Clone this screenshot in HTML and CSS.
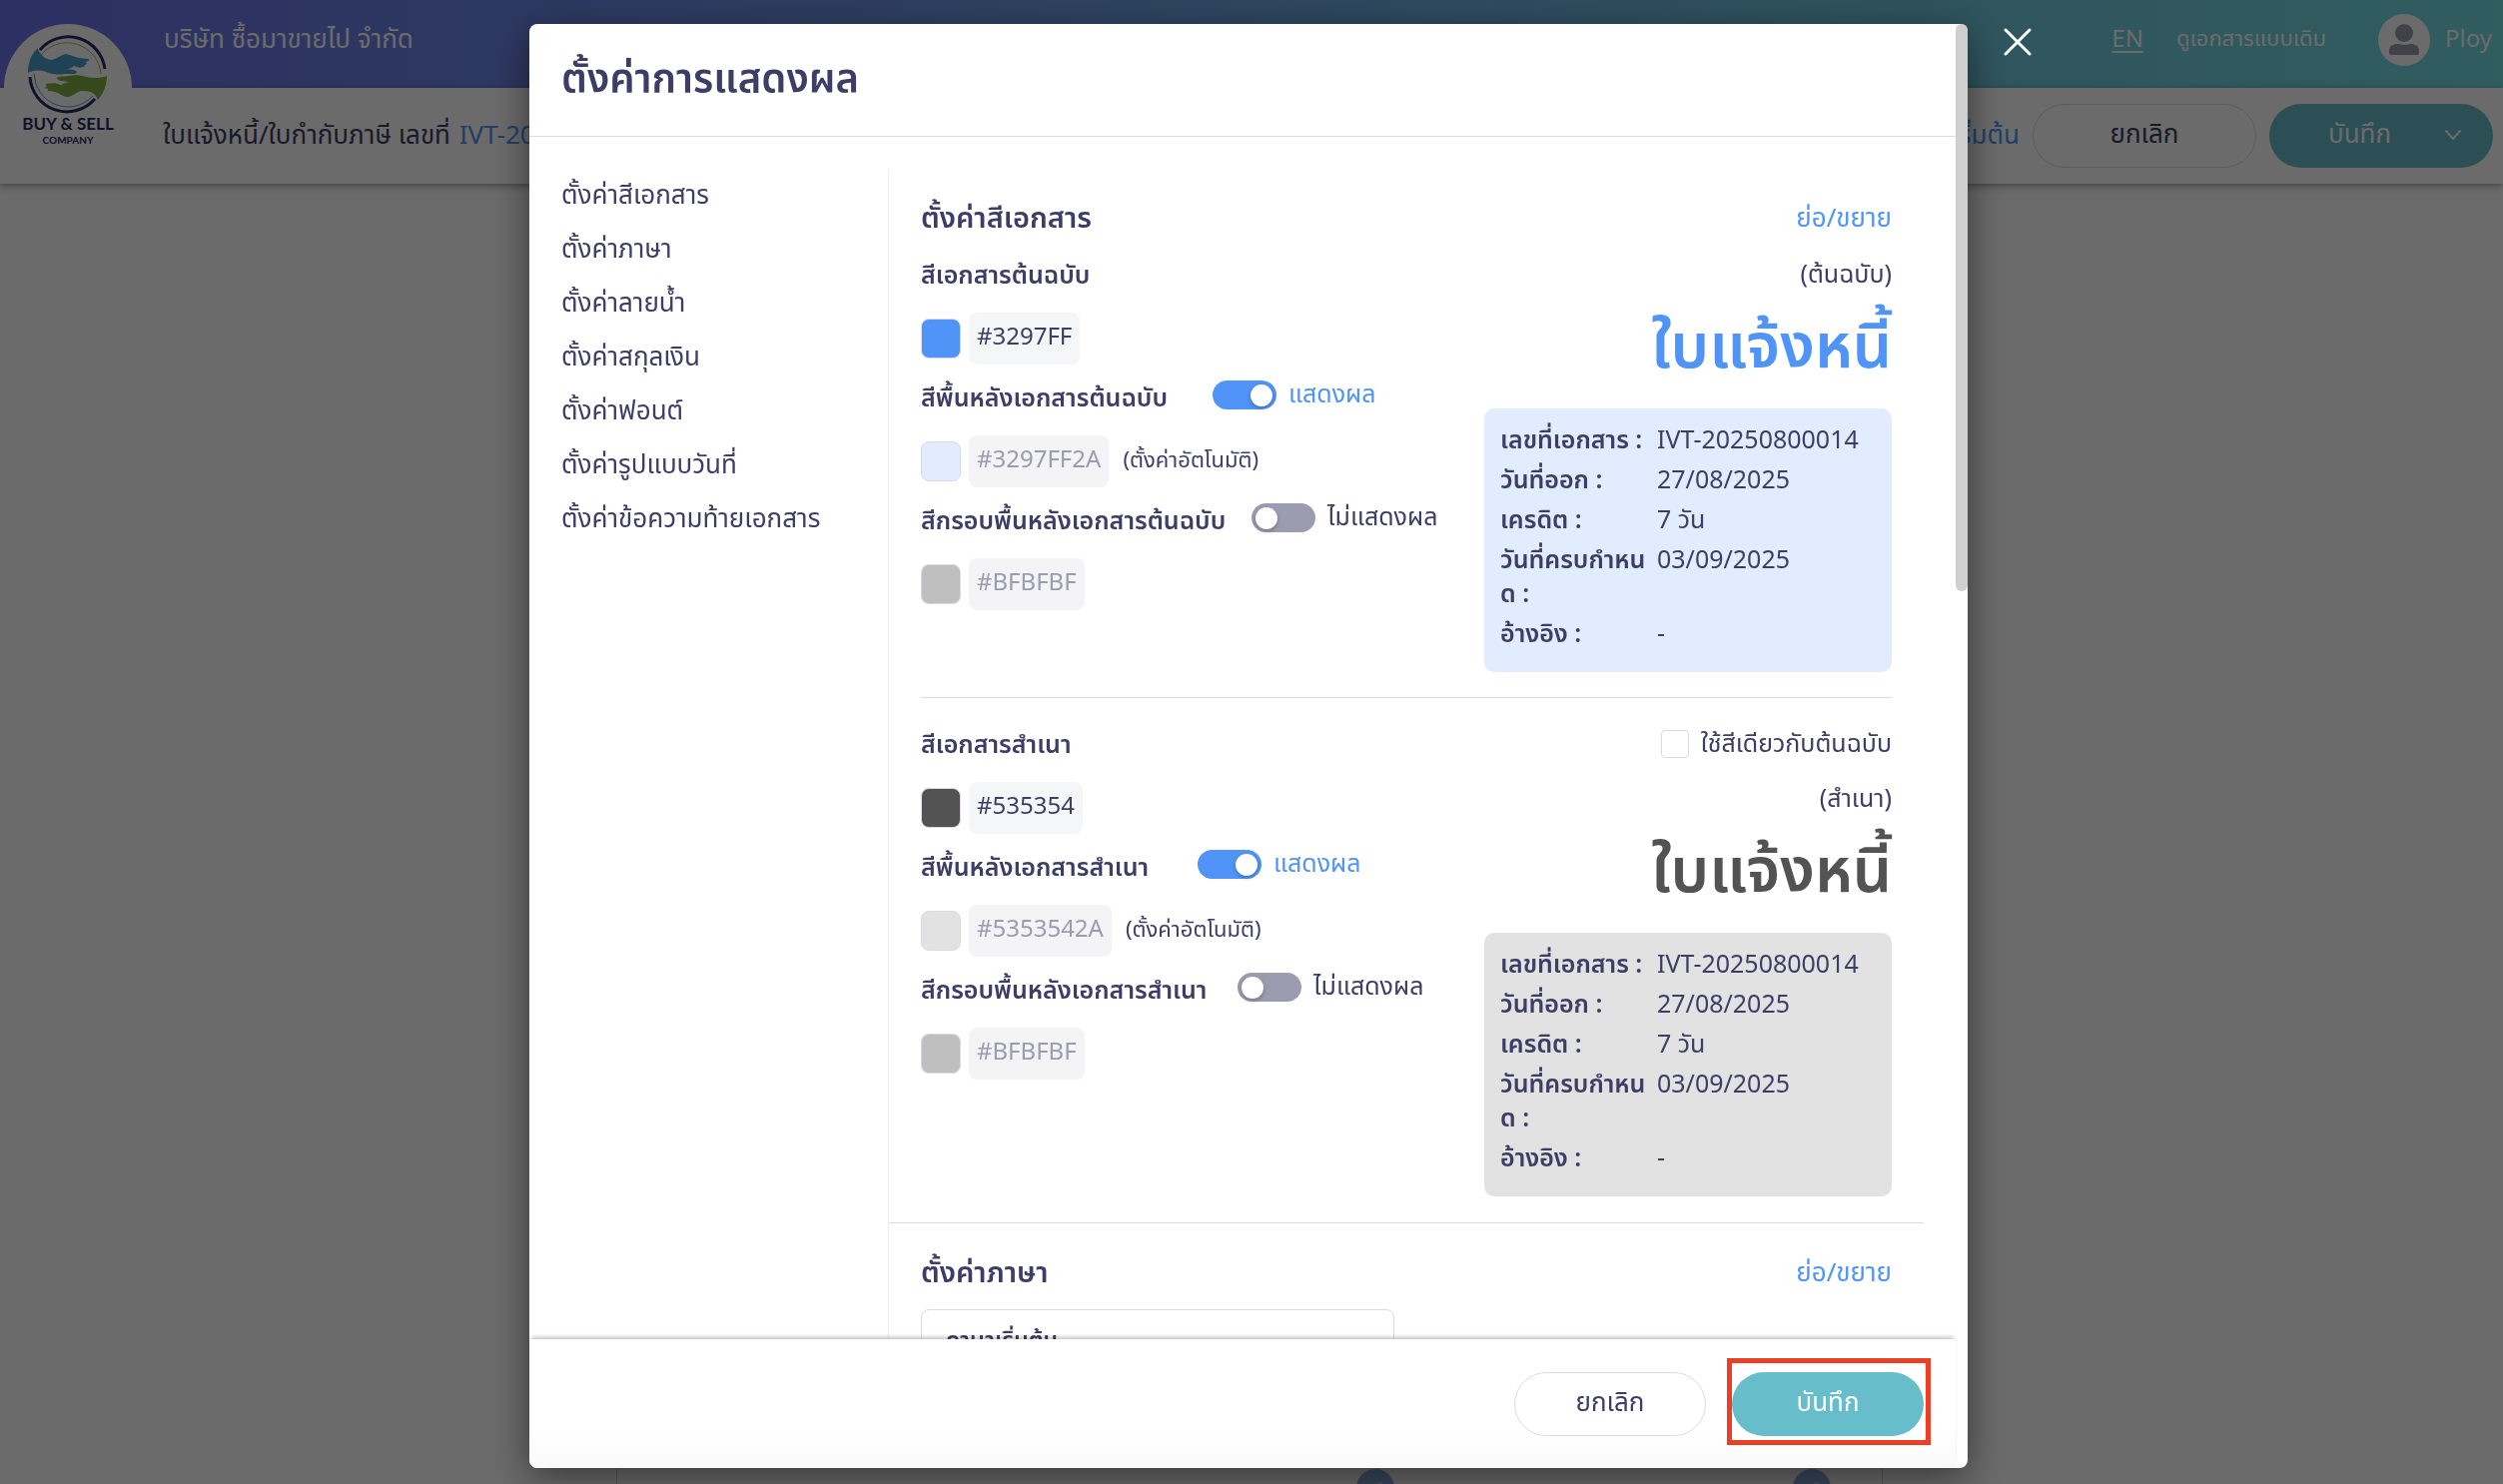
FILE: index.html
```html
<!DOCTYPE html>
<html lang="th">
<head>
<meta charset="utf-8">
<meta name="viewport" content="width=device-width, initial-scale=1">
<title>ตั้งค่าการแสดงผล</title>
<link rel="stylesheet" href="styles.css">
</head>
<body>
<div class="page">
  <header class="topbar">
    <p class="company">บริษัท ซื้อมาขายไป จำกัด</p>
    <nav class="topnav">
      <a class="lang" href="#">EN</a>
      <a class="old-view" href="#">ดูเอกสารแบบเดิม</a>
      <a class="user" href="#">
        <span class="avatar">
          <svg viewBox="0 0 52 52" width="52" height="52" aria-hidden="true">
            <circle cx="26" cy="19" r="9" fill="#9c9cb0"/>
            <path d="M11 37c0-5 4-7 8-7 2 0 4 1 7 1s5-1 7-1c4 0 8 2 8 7v2c0 1-1 2-2 2H13c-1 0-2-1-2-2z" fill="#9c9cb0"/>
          </svg>
        </span>
        Ploy
      </a>
    </nav>
  </header>
  <div class="docbar">
    <div class="logo">
      <svg class="emblem" viewBox="0 0 80 80" width="80" height="80" aria-hidden="true">
        <path d="M12 16A37 37 0 0 1 77 35" fill="none" stroke="#2b2962" stroke-width="3"/>
        <path d="M13 21A34 34 0 0 1 73 40" fill="none" stroke="#9dbb4c" stroke-width="1"/>
        <path d="M2 43A37 37 0 0 0 67 65" fill="none" stroke="#2b2962" stroke-width="3"/>
        <path d="M6 40A34 34 0 0 0 65 62" fill="none" stroke="#5d9ec0" stroke-width="1"/>
        <path d="M10 14C3 20 0 29 0 39c7-3 12-3 18-1 8 3 13 3 18 2h11c3-1 2-3-1-4l-8-1c5 0 7-2 8-3l6 2 2-1 2 0 1-2 2-1-1-2 3-1c1-1 0-2-1-2l-9-1-13-4c-5 1-9 5-15 6-6-1-11-5-13-11z" fill="#4b9dc9"/>
        <path d="M70 66c6-7 9-15 9-24-8 3-14 2-21 1-6-2-12-2-17-1l-11 1c-2 1 0 4 3 4l8 1c-4 1-6 2-8 3l-6-2-9 1c-1 1 0 2 1 2l-2 2 3 1 0 2 3 0 7 2c3 2 6 4 10 4 6-1 9-6 15-6 8 0 13 3 15 9z" fill="#7eae43"/>
      </svg>
      <strong class="logo-name">BUY &amp; SELL</strong>
      <span class="logo-sub">COMPANY</span>
    </div>
    <p class="doc-title">ใบแจ้งหนี้/ใบกำกับภาษี เลขที่ <a class="doc-no" href="#">IVT-20250800014</a></p>
    <div class="doc-actions">
      <a class="link" href="#">ตั้งค่าเริ่มต้น</a>
      <button class="btn btn-outline" type="button">ยกเลิก</button>
      <button class="btn btn-primary btn-split" type="button"><span>บันทึก</span>
        <svg viewBox="0 0 18 12" width="18" height="12" aria-hidden="true"><path d="M2 2l7 8 7-8" fill="none" stroke="#fff" stroke-width="2" stroke-linecap="round" stroke-linejoin="round"/></svg>
      </button>
    </div>
  </div>
  <main class="workspace">
    <div class="sheet">
      <button class="add" type="button" aria-label="เพิ่ม"><svg viewBox="0 0 40 40" width="38" height="38" aria-hidden="true"><circle cx="20" cy="20" r="20" fill="#86abdf"/><circle cx="25" cy="17" r="3" fill="#c4d2e6"/></svg></button>
      <button class="add" type="button" aria-label="เพิ่มรายการ"><svg viewBox="0 0 40 40" width="38" height="38" aria-hidden="true"><circle cx="20" cy="20" r="20" fill="#86abdf"/><circle cx="25" cy="17" r="3" fill="#c4d2e6"/></svg></button>
    </div>
  </main>
</div>

<div class="overlay">
  <section class="modal" role="dialog" aria-labelledby="modal-title">
    <button class="close" type="button" aria-label="ปิด"><svg viewBox="0 0 28 28" width="28" height="28" aria-hidden="true"><path d="M2 2l24 24M26 2L2 26" stroke="#fff" stroke-width="3" stroke-linecap="round"/></svg></button>
    <span class="scroll-thumb"></span>
    <header class="modal-head"><h1 id="modal-title">ตั้งค่าการแสดงผล</h1></header>
    <div class="modal-body">
      <nav class="side">
        <a href="#color">ตั้งค่าสีเอกสาร</a>
        <a href="#lang">ตั้งค่าภาษา</a>
        <a href="#watermark">ตั้งค่าลายน้ำ</a>
        <a href="#currency">ตั้งค่าสกุลเงิน</a>
        <a href="#font">ตั้งค่าฟอนต์</a>
        <a href="#date">ตั้งค่ารูปแบบวันที่</a>
        <a href="#footer">ตั้งค่าข้อความท้ายเอกสาร</a>
      </nav>
      <div class="content">
        <section class="group" id="color">
          <div class="group-head"><h2>ตั้งค่าสีเอกสาร</h2><a class="link" href="#">ย่อ/ขยาย</a></div>
          <div class="color-set">
            <div class="settings">
              <div class="row"><label class="name" for="c1">สีเอกสารต้นฉบับ</label></div>
              <div class="picker"><button class="swatch blue" type="button" aria-label="เลือกสี"></button><input class="code" id="c1" value="#3297FF"></div>
              <div class="row"><label class="name w-bg" for="c2">สีพื้นหลังเอกสารต้นฉบับ</label><label class="switch on"><input type="checkbox" checked>แสดงผล</label></div>
              <div class="picker"><button class="swatch blue-light" type="button" aria-label="เลือกสี"></button><input class="code" id="c2" value="#3297FF2A" disabled><span class="note">(ตั้งค่าอัตโนมัติ)</span></div>
              <div class="row"><label class="name w-frame" for="c3">สีกรอบพื้นหลังเอกสารต้นฉบับ</label><label class="switch"><input type="checkbox">ไม่แสดงผล</label></div>
              <div class="picker"><button class="swatch gray" type="button" aria-label="เลือกสี"></button><input class="code" id="c3" value="#BFBFBF" disabled></div>
            </div>
            <div class="preview">
              <p class="kind">(ต้นฉบับ)</p>
              <p class="doc-name">ใบแจ้งหนี้</p>
              <dl class="info">
                <dt>เลขที่เอกสาร :</dt><dd>IVT-20250800014</dd>
                <dt>วันที่ออก :</dt><dd>27/08/2025</dd>
                <dt>เครดิต :</dt><dd>7 วัน</dd>
                <dt>วันที่ครบกำหนด :</dt><dd>03/09/2025</dd>
                <dt>อ้างอิง :</dt><dd>-</dd>
              </dl>
            </div>
          </div>
          <div class="color-set">
            <div class="settings">
              <div class="row"><label class="name" for="c4">สีเอกสารสำเนา</label></div>
              <div class="picker"><button class="swatch dark" type="button" aria-label="เลือกสี"></button><input class="code" id="c4" value="#535354"></div>
              <div class="row"><label class="name w-bg-copy" for="c5">สีพื้นหลังเอกสารสำเนา</label><label class="switch on"><input type="checkbox" checked>แสดงผล</label></div>
              <div class="picker"><button class="swatch dark-light" type="button" aria-label="เลือกสี"></button><input class="code" id="c5" value="#5353542A" disabled><span class="note">(ตั้งค่าอัตโนมัติ)</span></div>
              <div class="row"><label class="name w-frame-copy" for="c6">สีกรอบพื้นหลังเอกสารสำเนา</label><label class="switch"><input type="checkbox">ไม่แสดงผล</label></div>
              <div class="picker"><button class="swatch gray" type="button" aria-label="เลือกสี"></button><input class="code" id="c6" value="#BFBFBF" disabled></div>
            </div>
            <div class="preview copy">
              <label class="same"><input type="checkbox">ใช้สีเดียวกับต้นฉบับ</label>
              <p class="kind">(สำเนา)</p>
              <p class="doc-name">ใบแจ้งหนี้</p>
              <dl class="info">
                <dt>เลขที่เอกสาร :</dt><dd>IVT-20250800014</dd>
                <dt>วันที่ออก :</dt><dd>27/08/2025</dd>
                <dt>เครดิต :</dt><dd>7 วัน</dd>
                <dt>วันที่ครบกำหนด :</dt><dd>03/09/2025</dd>
                <dt>อ้างอิง :</dt><dd>-</dd>
              </dl>
            </div>
          </div>
        </section>
        <section class="group" id="lang">
          <div class="group-head"><h2>ตั้งค่าภาษา</h2><a class="link" href="#">ย่อ/ขยาย</a></div>
          <div class="lang-card">ภาษาเริ่มต้น</div>
        </section>
      </div>
    </div>
    <footer class="modal-foot">
      <button class="btn btn-outline" type="button">ยกเลิก</button>
      <div class="marked"><button class="btn btn-primary" type="button">บันทึก</button></div>
    </footer>
  </section>
</div>
</body>
</html>
```
FILE: styles.css
```css
* { box-sizing: border-box; }

html, body { height: 100%; margin: 0; }

body {
  overflow: hidden;
  color: #3d3d66;
  font: 400 26px/40px "Noto Sans Thai", "Noto Sans", sans-serif;
}

h1, h2, p, dl, dd { margin: 0; }
a { color: inherit; text-decoration: none; }
button, input { margin: 0; font: inherit; color: inherit; }
button { padding: 0; border: 0; background: none; }
svg { display: block; }

.link { color: #5094f8; }

/* page behind the dialog */
.page { display: flex; flex-direction: column; height: 100%; background: #fff; }

.topbar {
  display: flex;
  align-items: center;
  justify-content: space-between;
  height: 88px;
  padding: 0 11px 8px 164px;
  color: #fff;
  background: linear-gradient(90deg, #6b72e9, #6e98e7 38%, #70c6e0 74%, #75dde2);
}

.topnav { display: flex; align-items: center; gap: 33px; }
.lang { font-size: 24px; text-decoration: underline; text-underline-offset: 4px; }
.old-view { font-size: 22px; }
.user { display: flex; align-items: center; gap: 15px; margin-left: 19px; font-size: 24px; }
.avatar { border-radius: 50%; background: #fff; }

.docbar {
  display: flex;
  align-items: center;
  height: 96px;
  padding: 0 10px 0 4px;
  background: #fff;
  box-shadow: 0 2px 8px rgba(0, 0, 0, .4);
}

.logo {
  display: flex;
  flex-direction: column;
  align-items: center;
  align-self: flex-start;
  width: 128px;
  height: 128px;
  margin-top: -64px;
  padding-top: 10px;
  border-radius: 50%;
  background: #fff;
  color: #2b2962;
}
.logo-name { font: 700 17px/20px Lato, sans-serif; white-space: nowrap; }
.logo-sub { font: 700 10px/12px Lato, sans-serif; }

.doc-title { margin-left: 31px; }
.doc-no { margin-left: 2px; color: #5094f8; }
.doc-actions { display: flex; align-items: center; gap: 13px; margin-left: auto; }

.btn { width: 192px; height: 64px; padding-bottom: 2px; border-radius: 32px; }
.btn-outline { border: 1px solid #dadae6; }
.btn-primary { color: #fff; background: #67bdc9; }
.doc-actions .btn { width: 224px; }
.btn-split { display: flex; align-items: center; justify-content: flex-end; gap: 53px; padding-right: 31px; }

.workspace { flex: 1; display: flex; justify-content: center; padding: 20px 4px 0 0; }
.sheet {
  display: flex;
  justify-content: flex-end;
  align-items: flex-end;
  gap: 399px;
  flex: 0 1 1268px;
  margin-bottom: -24px;
  padding: 0 51px 0 0;
  border: 1px solid #d0d0d8;
}

/* dialog */
.overlay {
  position: fixed;
  inset: 0;
  display: flex;
  justify-content: center;
  padding: 24px 6px 16px 0;
  background: rgba(0, 0, 0, .58);
}

.modal {
  position: relative;
  display: flex;
  flex-direction: column;
  flex: 0 1 1440px;
  min-width: 0;
  padding-right: 12px;
  border-radius: 8px;
  background: #fff;
  box-shadow: 0 10px 40px rgba(0, 0, 0, .5);
}

.close { position: absolute; top: 4px; right: -64px; }
.scroll-thumb {
  position: absolute;
  top: 0;
  right: 0;
  width: 12px;
  height: 568px;
  border-radius: 6px;
  background: #cfcfcf;
}

.modal-head { padding: 29px 32px 27px; border-bottom: 1px solid #dadae6; }
.modal-head h1 { font-size: 40px; font-weight: 600; line-height: 56px; }

.modal-body { display: flex; flex: 1; min-height: 0; padding: 32px 32px 0; overflow: hidden; }

.side {
  display: flex;
  flex-direction: column;
  gap: 14px;
  flex: 0 0 327px;
  padding-top: 7px;
}

.content { flex: 1; min-width: 0; height: max-content; border-left: 1px solid #eeeef3; }

.group { padding: 26px 32px; }
.group + .group { border-top: 1px solid #dadae6; }

.group-head { display: flex; align-items: center; justify-content: space-between; height: 48px; margin-bottom: 12px; }
.group-head h2 { font-size: 29px; font-weight: 600; }

.color-set { display: flex; justify-content: space-between; }
.color-set + .color-set { margin-top: 25px; padding-top: 26px; border-top: 1px solid #dadae6; }

.settings { display: flex; flex-direction: column; }
.row { display: flex; height: 40px; margin-bottom: 18px; }
.name { font-size: 25px; font-weight: 600; line-height: 42px; white-space: nowrap; }
.w-bg { min-width: 292px; }
.w-frame { min-width: 331px; }
.w-bg-copy { min-width: 277px; }
.w-frame-copy { min-width: 317px; }

.switch { display: flex; align-items: center; gap: 12px; height: 34px; font-size: 25px; white-space: nowrap; }
.switch.on { color: #5094f8; }
.switch input {
  appearance: none;
  width: 64px;
  height: 29px;
  padding: 4px;
  border-radius: 15px;
  background: #9c9cb0;
}
.switch input::before {
  content: "";
  display: block;
  width: 22px;
  height: 22px;
  border-radius: 50%;
  background: #fff;
  box-shadow: 0 2px 4px rgba(0, 0, 0, .25);
}
.switch input:checked { background: #5094f8; }
.switch input:checked::before { margin-left: auto; }

.picker { display: flex; align-items: center; height: 52px; margin-bottom: 13px; }
.swatch { width: 40px; height: 40px; margin-right: 8px; border: 1px solid #dadae6; border-radius: 8px; }
.blue { background: #5094f8; }
.blue-light { background: #e1edfe; }
.gray { background: #bfbfbf; }
.dark { background: #535354; }
.dark-light { background: #e2e2e2; }

.code {
  field-sizing: content;
  height: 52px;
  padding: 0 8px 2px;
  border: 0;
  border-radius: 8px;
  background: #f5f6f8;
  font-size: 24px;
}
.code:disabled { color: #9c9cb0; background: #f4f4f7; }
.note { margin-left: 14px; font-size: 22px; }

.preview { width: 408px; }
.kind { font-size: 25px; text-align: right; }
.doc-name { height: 114px; color: #5094f8; font-size: 62px; font-weight: 600; line-height: 108px; text-align: right; }
.copy .doc-name { color: #535354; }

.same { display: flex; align-items: center; justify-content: flex-end; gap: 12px; margin-bottom: 15px; font-size: 25px; }
.same input { appearance: none; width: 28px; height: 28px; border: 1px solid #dadae6; border-radius: 4px; }

.info {
  display: grid;
  grid-template-columns: 157px 1fr;
  row-gap: 6px;
  padding: 15px 16px 21px;
  border-radius: 10px;
  background: #e1edfe;
  font-size: 25px;
  line-height: 34px;
}
.copy .info { background: #e2e2e2; }
.info dt { font-weight: 600; word-break: break-all; }

.lang-card { width: 474px; padding: 11px 24px; border: 1px solid #dadae6; border-radius: 8px; font-size: 23px; font-weight: 600; }

.modal-foot {
  z-index: 1;
  display: flex;
  justify-content: flex-end;
  gap: 26px;
  padding: 33px 32px 32px;
  border-radius: 0 0 0 8px;
  background: linear-gradient(#fff 70%, #fafafa);
  box-shadow: 0 -4px 4px -2px rgba(0, 0, 0, .25);
}

.marked { position: relative; }
.marked::after {
  content: "";
  position: absolute;
  inset: -14px -7px -9px -5px;
  border: 5px solid #eb4026;
  pointer-events: none;
}
```
